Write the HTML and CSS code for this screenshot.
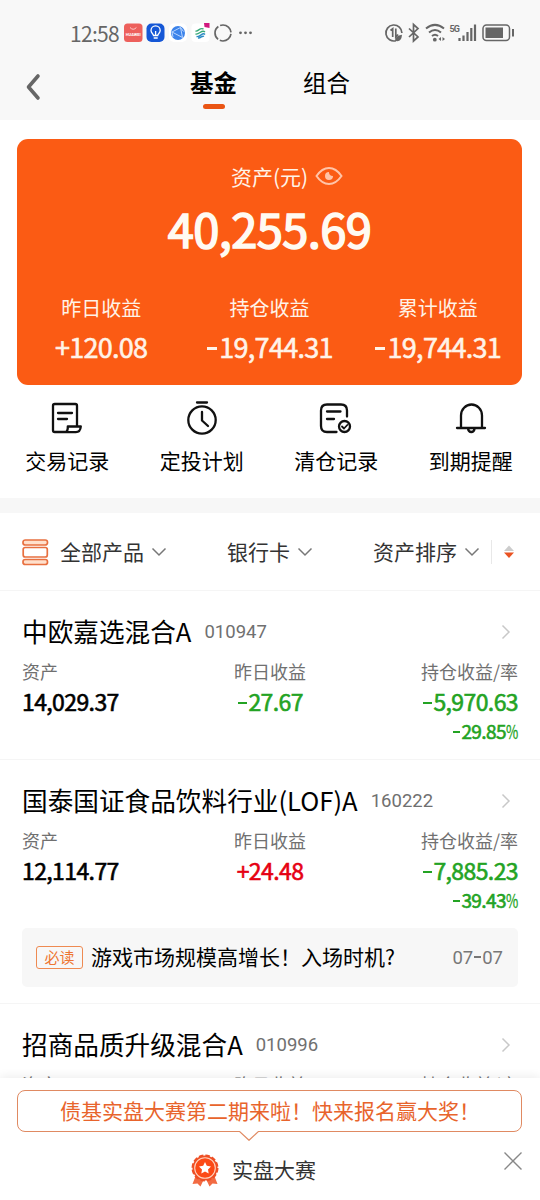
FILE: index.html
```html
<!DOCTYPE html>
<html lang="zh-CN">
<head>
<meta charset="utf-8">
<title>基金</title>
<link rel="stylesheet" href="styles.css">
</head>
<body>
<div class="screen">
  <main class="page">
  <header class="top">
    <div class="status">
      <span class="clock">12:58</span>
      <svg class="status-apps" width="134" height="22" viewBox="0 0 134 22">
        <rect x="1" y="1.500" width="18.500" height="18.500" rx="3.500" fill="#ed605c"/>
        <path d="M7 5.500q3.200 3.500 6.400 0" fill="none" stroke="#fcc" stroke-width="1"/>
        <text x="10.200" y="14" class="tiny-brand">HUAWEI</text>
        <rect x="23.500" y="1.500" width="18" height="18.500" rx="5" fill="#1557d6"/>
        <path d="M30.500 13.500c0-1.500-2.500-2.300-2.500-5a4.600 4.600 0 0 1 9.200 0c0 2.700-2.500 3.500-2.500 5zM30.700 16h4M32.600 13V9" fill="none" stroke="#fff" stroke-width="1.300"/>
        <rect x="46" y="1.500" width="18" height="18.500" rx="5" fill="#fff"/>
        <circle cx="55" cy="11" r="7" fill="#3c83ea"/>
        <path d="M49 10l8.500-4.500 2 10zM57.500 5.500l3 4M49 10l1 5" fill="none" stroke="#b8d5ff" stroke-width="1"/>
        <rect x="68.500" y="1.500" width="18" height="18.500" rx="4" fill="#fff"/>
        <g fill="none" stroke-width="1.400"><path d="M72.500 9c3 1 4-4 8-2M72.500 12c4 1 6-5 9.500-2" stroke="#39a978"/><path d="M73.500 14.500c4 1 6-5 8.500-2M75 16c3 .5 4-3 6-1.500" stroke="#2b8bc3"/></g>
        <path d="M81 1h5.500v5l-5-1z" fill="#d1197f"/>
        <circle cx="100" cy="11" r="8" fill="none" stroke="#666" stroke-width="1.700" stroke-dasharray="14.750 2" stroke-dashoffset="-1"/>
        <g fill="#666"><circle cx="117.500" cy="10.800" r="1.400"/><circle cx="122.500" cy="10.800" r="1.400"/><circle cx="127.500" cy="10.800" r="1.400"/></g>
      </svg>
      <svg class="status-system" width="132" height="22" viewBox="0 0 132 22" fill="none" stroke="#666" stroke-width="1.700">
        <path d="M12 18.700A8 8 0 1 1 17.900 11M6.500 8.500l2.200-1.800V15M11.800 6.500V15l2.300-2.500"/>
        <path d="M11 18.800q0-5 7-6-.5 7-5.500 6.300z" fill="#666" stroke="none"/>
        <path d="M25 6.500l9 8.500-4.500 4V2.500L34 6.500 25 15" stroke-width="1.700"/>
        <path d="M42 6.600q9-7.500 18 0M45 10.500q6-5 12 0M48 14q3-2.500 6 0" stroke-width="2"/>
        <circle cx="50.800" cy="17.700" r="1.900" fill="#666" stroke="none"/>
        <path d="M54.500 17l2.500-2v4zM61 17l-2.500-2v4z" fill="#666" stroke="none"/>
        <text x="65.500" y="9.500" class="net">5G</text>
        <path d="M75.500 19v-3M79.500 19v-5.500M83.500 19v-9M87.300 19V6M91 19V2.500" stroke-width="2.200"/>
        <rect x="99" y="3" width="26.500" height="15.500" rx="3.500" stroke-width="1.500"/>
        <rect x="101.500" y="5.500" width="17.500" height="10.500" fill="#666" stroke="none"/>
        <path d="M129 7v7.500" stroke-width="2"/>
      </svg>
    </div>
    <nav class="tabs">
      <svg class="back" width="20" height="30" viewBox="0 0 20 30"><path d="M14 5L4.500 16 14 27" fill="none" stroke="#666" stroke-width="3.600" stroke-linecap="round" stroke-linejoin="round"/></svg>
      <span class="tab tab-on">基金</span>
      <span class="tab">组合</span>
    </nav>
  </header>

  <section class="card">
    <div class="card-head">资产(元)
      <svg width="28" height="20" viewBox="0 0 28 20"><path d="M1.500 10Q7 2 14 2t12.500 8Q21 18 14 18T1.500 10z" fill="none" stroke="#ffc4a8" stroke-width="2"/><path d="M14 6a4 4 0 1 0 4 4q-4 0-4-4z" fill="#ffc4a8"/></svg>
    </div>
    <div class="total num">40,255.69</div>
    <div class="stats">
      <div class="stat"><span>昨日收益</span><b class="num">+120.08</b></div>
      <div class="stat"><span>持仓收益</span><b class="num"><i class="dash"></i>19,744.31</b></div>
      <div class="stat"><span>累计收益</span><b class="num"><i class="dash"></i>19,744.31</b></div>
    </div>
  </section>

  <section class="actions">
    <div class="action">
      <svg viewBox="0 0 36 36"><path d="M28 26V5.700q0-1.700-1.700-1.700H5.700Q4 4 4 5.700v24.600Q4 32 5.700 32h13M9 13h14M9 19h9M16.500 32.200q2.500-1 2.300-5.700h13q-.5 5.700-5 5.700z"/></svg>
      <span>交易记录</span>
    </div>
    <div class="action">
      <svg viewBox="0 0 36 36"><circle cx="18" cy="20" r="13.700"/><path d="M13 2.500h10M18 12v8.500l6 5.500"/></svg>
      <span>定投计划</span>
    </div>
    <div class="action">
      <svg viewBox="0 0 36 36"><path d="M29 16.500V10.500q0-6-6-6H9q-6 0-6 6V26q0 6 6 6h9.500M9 11.500h13.500M9 19h7"/><circle cx="26.500" cy="26.500" r="5.500"/><path d="M24 26.500l2 2 3.300-3.500" stroke-width="1.800"/></svg>
      <span>清仓记录</span>
    </div>
    <div class="action">
      <svg viewBox="0 0 36 36"><path d="M8 27V15.500a10.500 11 0 0 1 21 0V27M4 28h28M15 28.500q.5 3.500 3.300 3.500t3.300-3.500"/></svg>
      <span>到期提醒</span>
    </div>
  </section>

  <section class="filters">
    <svg class="stack" width="27" height="28" viewBox="0 0 27 28" fill="#ffe0cc" stroke="#e87040" stroke-width="1.700"><rect x="1" y="2" width="24.500" height="5" rx="2.300"/><rect x="1.200" y="9.500" width="24.100" height="9.500" rx="2" fill="#fff"/><rect x="1" y="21.500" width="24.500" height="5" rx="2.300"/></svg>
    <span class="filter f-product"><span>全部产品</span><svg class="down" viewBox="0 0 16 10"><path d="M1.500 1.500L8 8l6.500-6.500"/></svg></span>
    <span class="filter f-bank"><span>银行卡</span><svg class="down" viewBox="0 0 16 10"><path d="M1.500 1.500L8 8l6.500-6.500"/></svg></span>
    <span class="filter f-sort"><span>资产排序</span><svg class="down" viewBox="0 0 16 10"><path d="M1.500 1.500L8 8l6.500-6.500"/></svg></span>
    <svg class="order" width="12" height="14" viewBox="0 0 12 14"><path d="M1 6l5-5.500L11 6z" fill="#ccc"/><path d="M1 7.500h10L6 13z" fill="#ea5322"/></svg>
  </section>

  <section class="fund">
    <div class="fund-title"><span class="name">中欧嘉选混合A</span><span class="code">010947</span><svg class="go" viewBox="0 0 10 16"><path d="M1.500 1.500L8 8l-6.500 6.500"/></svg></div>
    <div class="fund-row labels"><span>资产</span><span>昨日收益</span><span>持仓收益/率</span></div>
    <div class="fund-row values num"><span>14,029.37</span><span class="down-text"><i class="dash"></i>27.67</span><span class="down-text"><i class="dash"></i>5,970.63</span></div>
    <div class="rate num"><i class="dash"></i>29.85<em>%</em></div>
  </section>

  <section class="fund">
    <div class="fund-title"><span class="name">国泰国证食品饮料行业(LOF)A</span><span class="code">160222</span><svg class="go" viewBox="0 0 10 16"><path d="M1.500 1.500L8 8l-6.500 6.500"/></svg></div>
    <div class="fund-row labels"><span>资产</span><span>昨日收益</span><span>持仓收益/率</span></div>
    <div class="fund-row values num"><span>12,114.77</span><span class="up-text">+24.48</span><span class="down-text"><i class="dash"></i>7,885.23</span></div>
    <div class="rate num"><i class="dash"></i>39.43<em>%</em></div>
    <div class="notice"><span class="must">必读</span><span class="notice-text">游戏市场规模高增长！入场时机?</span><span class="date">07<i class="dash"></i>07</span></div>
  </section>

  <section class="fund">
    <div class="fund-title"><span class="name">招商品质升级混合A</span><span class="code">010996</span><svg class="go" viewBox="0 0 10 16"><path d="M1.500 1.500L8 8l-6.500 6.500"/></svg></div>
    <div class="fund-row labels"><span>资产</span><span>昨日收益</span><span>持仓收益/率</span></div>
  </section>
  </main>

  <footer class="dock">
    <div class="bubble">债基实盘大赛第二期来啦！快来报名赢大奖！
      <svg class="tail" width="20" height="10" viewBox="0 0 20 10"><path d="M0 0L10 9.300 20 0" fill="#fff" stroke="#e08a62" stroke-width="1.200"/></svg>
    </div>
    <div class="contest">
      <svg width="30" height="34" viewBox="0 0 30 34"><path d="M6 22L2.500 31l5-.5 3 3L14 26h2l3.500 7.500 3-3 5 .5L24 22z" fill="#f26b43"/><circle cx="15" cy="15" r="12.500" fill="#ee4f25" stroke="#ee4f25" stroke-width="2" stroke-dasharray="4.500 2.045"/><circle cx="15" cy="15" r="10.300" fill="#fc4a16" stroke="#ffd4c0" stroke-width="1.100"/><path d="M15 9l1.800 3.800 4.200.6-3 3 .7 4.200-3.700-2-3.700 2 .7-4.200-3-3 4.200-.6z" fill="#fff"/></svg>
      <span>实盘大赛</span>
    </div>
    <svg class="close" width="20" height="20" viewBox="0 0 20 20"><path d="M1.500 1.500l17 17M18.500 1.500l-17 17" stroke="#888" stroke-width="1.400"/></svg>
  </footer>
</div>
</body>
</html>
```

FILE: styles.css
```css
* { box-sizing: border-box; }
body { margin: 0; background: #fff; font-family: "Noto Sans CJK SC", sans-serif; color: #000; }
i, em { font-style: normal; }
b { font-weight: 400; }
.screen { position: relative; width: 540px; height: 1200px; overflow: hidden; }
.page { height: 1200px; overflow: hidden; }
.num { font-family: "Noto Sans CJK SC", sans-serif; font-weight: 400; -webkit-text-stroke: .6px currentColor; }
.dash { display: inline-block; width: .38em; height: .1em; margin: 0 .08em 0 .03em; background: currentColor; vertical-align: .3em; }

.top { height: 120px; background: #f8f8f8; }
.status { display: flex; align-items: center; height: 58px; padding: 8px 24px 0 70px; }
.clock { width: 53px; font: 400 21px/24px "Noto Sans CJK SC", sans-serif; letter-spacing: -.700px; color: #666; }
.status-system { margin-left: auto; }
.tiny-brand { font: 700 4px Roboto, sans-serif; fill: #fff; text-anchor: middle; }
.net { font: 700 9px Roboto, sans-serif; fill: #666; stroke: none; letter-spacing: -1px; }
.tabs { display: flex; height: 52px; padding-left: 24px; align-items: flex-start; }
.back { margin: 13px 146px 0 0; }
.tab { display: flex; flex-direction: column; align-items: center; width: 47px; margin-right: 66px; font-size: 23.500px; line-height: 36px; padding-top: 6px; white-space: nowrap; }
.tab-on { font-weight: 700; }
.tab-on::after { content: ""; width: 22px; height: 4.500px; margin-top: 4px; border-radius: 3px; background: #ea5514; }

.card { height: 246px; margin: 19px 18px 0 17px; padding-top: 24px; border-radius: 11px; background: #fb5b14; color: #fff3e8; }
.card-head { display: flex; justify-content: center; align-items: center; gap: 7px; height: 27px; font-size: 21px; line-height: 27px; padding-left: 35px; }
.card-head svg { margin-top: -1px; }
.total { height: 60px; margin-top: 8px; font-size: 47px; line-height: 60px; text-align: center; letter-spacing: -.600px; color: #fffaf2; -webkit-text-stroke-width: 1.600px; }
.stats { display: grid; grid-template-columns: repeat(3, 168.300px); margin-top: 36px; }
.stat { display: flex; flex-direction: column; align-items: center; font-size: 20px; line-height: 28px; }
.stat b { margin-top: 7px; font-size: 27px; line-height: 36px; letter-spacing: -.700px; }

.actions { display: grid; grid-template-columns: repeat(4, 134.500px); height: 113px; padding-top: 15px; }
.action { display: flex; flex-direction: column; align-items: center; font-size: 21px; line-height: 30px; }
.action svg { width: 36px; height: 36px; margin-bottom: 9px; fill: none; stroke: #111; stroke-width: 2.300; stroke-linecap: round; stroke-linejoin: round; }

.filters { display: flex; align-items: center; height: 93px; padding-left: 22px; border-top: 15px solid #f7f7f7; border-bottom: 1px solid #f5f5f5; font-size: 21px; color: #333; }
.filter { display: flex; align-items: center; gap: 7px; line-height: 28px; }
.filter > span { margin-top: -2px; }
.down { width: 16px; height: 10px; fill: none; stroke: #777; stroke-width: 1.500; }
.f-product { width: 167px; margin-left: 11px; }
.f-bank { width: 146px; }
.f-sort { width: 119px; height: 24px; padding-right: 11px; border-right: 1px solid #e8e8e8; white-space: nowrap; }
.order { margin-left: 11px; }

.fund { padding: 27px 22px 16px; border-bottom: 1px solid #f5f5f5; }
.fund-title { display: flex; align-items: center; height: 28px; font-size: 25.650px; line-height: 28px; }
.name { margin-top: -2px; }
.code { margin-left: 13px; font: 400 18.500px/28px Roboto, sans-serif; color: #707070; }
.go { width: 10px; height: 16px; margin: 0 7px 0 auto; fill: none; stroke: #c8c8c8; stroke-width: 1.500; }
.fund-row { display: grid; grid-template-columns: 1fr 1fr 1fr; white-space: nowrap; }
.fund-row span:nth-child(2) { text-align: center; }
.fund-row span:nth-child(3) { text-align: right; }
.labels { margin-top: 13px; font-size: 18px; line-height: 24px; color: #707070; }
.values { margin-top: 3px; font-size: 23px; line-height: 30px; letter-spacing: -.600px; }
.rate { margin-top: 3px; font-size: 19px; line-height: 24px; text-align: right; letter-spacing: -.600px; color: #23a323; }
.rate em { display: inline-block; width: .64em; transform: scaleX(.7); transform-origin: left; -webkit-text-stroke-width: .300px; }
.down-text { color: #23a323; }
.up-text { color: #e60012; }
.notice { display: flex; align-items: center; height: 59px; margin-top: 16px; padding: 0 15px 0 14px; border-radius: 5px; background: #f7f7f7; font-size: 21px; }
.must { width: 47px; height: 23px; border: 1px solid #ee8a52; border-radius: 3px; font-size: 15px; line-height: 20px; text-align: center; color: #ee7532; }
.notice-text { margin: -4px 0 0 8px; line-height: 28px; }
.date { margin-left: auto; font: 400 18.500px/28px Roboto, sans-serif; color: #777; }
.date .dash { height: 1.500px; }

.dock { position: absolute; left: 0; bottom: 0; width: 540px; height: 122px; padding: 12px 18px 0 17px; background: #fff; box-shadow: 0 -2px 9px rgba(0, 0, 0, .07); }
.bubble { position: relative; height: 42px; padding-left: 42px; border: 1px solid #e08a62; border-radius: 8px; font-size: 21px; line-height: 38px; white-space: nowrap; color: #e8642c; }
.tail { position: absolute; left: 221px; top: 39.500px; }
.contest { display: flex; align-items: center; height: 42px; margin: 17px 0 0 173px; gap: 12px; font-size: 21px; line-height: 28px; color: #333; }
.contest span { margin-top: -2px; }
.close { position: absolute; right: 17px; top: 73px; }
```
